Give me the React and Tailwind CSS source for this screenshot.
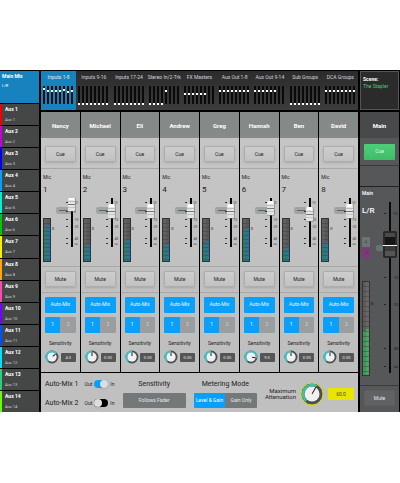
import { useState } from "react";

const auxes = [
  { color: "bg-[#f00000]" },
  { color: "bg-[#c800d8]" },
  { color: "bg-[#0000f0]" },
  { color: "bg-[#00a0ff]" },
  { color: "bg-[#00f0d0]" },
  { color: "bg-[#00c800]" },
  { color: "bg-[#f8f000]" },
  { color: "bg-[#ffa800]" },
  { color: "bg-[#ff48b0]" },
  { color: "bg-[#7000ff]" },
  { color: "bg-[#0050ff]" },
  { color: "bg-[#00e0ff]" },
  { color: "bg-[#28d078]" },
  { color: "bg-[#66ff00]" },
];

// dot heights inside each bank preview, null = no dot
const banks = [
  { name: "Inputs 1-8", dots: [3, 5, 5, 5, 5, 4, 6, 5] },
  { name: "Inputs 9-16", dots: [18, 18, 18, 18, 18, 18, 18, 18] },
  { name: "Inputs 17-24", dots: [18, 18, 18, 18, 18, 18, 18, 18] },
  { name: "Stereo In/2-Trk", dots: [18, 18, 18, 18, 5, null, null, null] },
  { name: "FX Masters", dots: [8, 8, 8, 8, 8, 8, null, null] },
  { name: "Aux Out 1-8", dots: [5, 5, 5, 5, 5, 5, 5, 5] },
  { name: "Aux Out 9-14", dots: [5, 5, 5, 5, 5, 5, null, null] },
  { name: "Sub Groups", dots: [18, 18, 18, 18, 18, 18, 18, 18] },
  { name: "DCA Groups", dots: [5, 5, 5, 5, 5, 5, 5, 5] },
];

const channels = [
  { name: "Nancy", level: 87, meter: 36, sens: "4.0", angle: 50 },
  { name: "Michael", level: 73, meter: 16, sens: "0.00", angle: 0 },
  { name: "Eli", level: 73, meter: 22, sens: "0.00", angle: 0 },
  { name: "Andrew", level: 73, meter: 17, sens: "0.00", angle: 0 },
  { name: "Greg", level: 73, meter: 20, sens: "0.00", angle: 0 },
  { name: "Hannah", level: 80, meter: 33, sens: "9.0", angle: 100 },
  { name: "Ben", level: 67, meter: 14, sens: "0.00", angle: 0 },
  { name: "David", level: 74, meter: 19, sens: "0.00", angle: 0 },
];

const arc = (cx, cy, r, angle) => {
  const point = (deg) => {
    const rad = ((deg - 90) * Math.PI) / 180;
    return `${cx + r * Math.cos(rad)} ${cy + r * Math.sin(rad)}`;
  };
  const large = angle + 140 > 180 ? 1 : 0;
  return `M${point(-140)} A${r} ${r} 0 ${large} 1 ${point(angle)}`;
};

const Sidebar = () => (
  <nav className="w-[39px] shrink-0 flex flex-col gap-px">
    <button className="h-8 px-0.5 pt-0.5 bg-[#1683be] text-left text-white flex flex-col gap-[3px]">
      <span className="text-[5px] leading-[7px] font-bold">Main Mix</span>
      <span className="text-[4px] leading-[6px]">L/R</span>
    </button>
    {auxes.map((aux, i) => (
      <button key={i} className="flex-1 flex bg-[#454746] text-left text-white">
        <span className={`w-0.5 self-stretch ${aux.color}`} />
        <span className="flex flex-col gap-1 pl-[3px] pt-0.5">
          <span className="text-[5px] leading-[7px] font-bold">Aux {i + 1}</span>
          <span className="text-[4px] leading-[5px] text-gray-300">Aux {i + 1}</span>
        </span>
      </button>
    ))}
  </nav>
);

const BankTab = ({ bank, active, onClick }) => (
  <button
    onClick={onClick}
    className={`flex-1 min-w-0 h-[39px] pt-0.5 flex flex-col items-center gap-[5px] whitespace-nowrap ${
      active ? "bg-[#1683be] text-gray-200" : "bg-linear-to-b from-[#2c2c2c] to-[#3c3c3c] text-gray-300"
    }`}
  >
    <span className="text-[5px] leading-[8px]">{bank.name}</span>
    <svg width="31" height="20" viewBox="0 0 31 20">
      {bank.dots.map((y, i) => (
        <g key={i}>
          <rect x={i * 4} y="0" width="2" height="18" fill="#0a0a0a" />
          {y !== null && <rect x={i * 4} y={y - 1} width="2" height="2" fill="#fff" />}
        </g>
      ))}
    </svg>
  </button>
);

const Meter = ({ level }) => (
  <svg width="8" height="44" viewBox="0 0 8 44">
    <rect width="8" height="44" fill="#333" />
    <rect x="1" y="1" width="3" height="42" fill="#606060" />
    <rect x="4" y="1" width="3" height="42" fill="#585858" />
    <rect x="1" y={46 - level} width="3" height={level - 3} fill="#347865" />
    <rect x="4" y={43 - level} width="3" height={level} fill="#2674a0" />
    {[5, 9, 13, 17, 21, 25, 29, 33, 37, 41].map((y) => (
      <rect key={y} x="1" y={y} width="6" height="1" fill="#333" opacity="0.35" />
    ))}
  </svg>
);

const marks = [
  [4, "10"],
  [13, "0"],
  [21, "-10"],
  [28, "-20"],
  [40, "-40"],
  [45, "-∞"],
];

const Fader = ({ name, initial }) => {
  const [level, setLevel] = useState(initial);
  const y = Math.round(49 - (level * 49) / 100);
  return (
    <div className="relative">
      <svg width="24" height="52" viewBox="0 0 24 52">
        <rect x="0" y="9" width="16" height="7" rx="2" fill="#a0a4a5" />
        <rect x="3" y="12" width="8" height="1" fill="#606466" />
        {marks.map(([my, label]) => (
          <g key={label}>
            <rect x="10" y={my} width="2" height="1" fill="#333" />
            <text x="18" y={my + 2} fontSize="3" fill="#333">{label}</text>
          </g>
        ))}
        <rect x="15" y="0" width="2" height="49" fill="#050505" />
        <rect x="12" y={y - 7} width="8" height="15" rx="1" fill="#777" opacity="0.5" />
        <rect x="12" y={y - 7} width="7" height="14" rx="1" fill="#e4e4e4" />
        <rect x="13" y={y - 7} width="5" height="3" fill="#fff" />
        <rect x="12" y={y - 3} width="7" height="1" fill="#bdbdbd" />
        <rect x="12" y={y} width="7" height="1" fill="#777" />
        <rect x="12" y={y + 3} width="7" height="1" fill="#c4c4c4" />
      </svg>
      <input
        type="range"
        aria-label={`${name} level`}
        value={level}
        onChange={(e) => setLevel(Number(e.target.value))}
        className="absolute inset-0 w-full h-full opacity-0 cursor-pointer [writing-mode:vertical-lr] [direction:rtl]"
      />
    </div>
  );
};

const Knob = ({ name, initial }) => {
  const [angle, setAngle] = useState(initial);
  return (
    <div className="relative shrink-0">
      <svg width="14" height="14" viewBox="0 0 14 14">
        <circle cx="7" cy="7" r="5.5" fill="none" stroke="#4c5052" strokeWidth="2" />
        <path d={arc(7, 7, 5.5, angle)} fill="none" stroke="#3cc4cc" strokeWidth="2" />
        <circle cx="7" cy="7" r="4.5" fill="#f0f0f0" />
        <line x1="7" y1="6" x2="7" y2="2.5" stroke="#222" strokeWidth="1" transform={`rotate(${angle} 7 7)`} />
      </svg>
      <input
        type="range"
        min="-140"
        max="140"
        aria-label={`${name} sensitivity`}
        value={angle}
        onChange={(e) => setAngle(Number(e.target.value))}
        className="absolute inset-0 w-full h-full opacity-0 cursor-pointer"
      />
    </div>
  );
};

const LightButton = ({ children }) => (
  <button className="block w-full h-4 rounded-[1px] border border-[#adadad] bg-linear-to-b from-[#cdcdcd] to-[#c2c2c2] shadow-sm text-[5px] leading-[12px] text-[#222222]">
    {children}
  </button>
);

const ChannelStrip = ({ channel, number }) => {
  const [autoMix, setAutoMix] = useState(true);
  const [group, setGroup] = useState(1);

  return (
    <section className="flex-1 min-w-0 bg-linear-to-b from-[#c6c6c6] to-[#bebebe] text-[#222222] flex flex-col">
      <h2 className="h-[26px] pt-px bg-[#858a89] text-white text-[6px] font-bold flex items-center justify-center">
        {channel.name}
      </h2>
      <div className="h-[31px] px-1 pt-2 border-b border-[#a8a8a8]">
        <LightButton>Cue</LightButton>
      </div>
      <div className="h-[98px] pl-0.5 pt-1 border-b border-[#a8a8a8]">
        <div className="text-[5px] leading-[9px]">Mic</div>
        <div className="text-[8px] leading-[16px]">{number}</div>
        <div className="flex justify-between">
          <div className="flex pt-5">
            <Meter level={channel.meter} />
            <span className="pt-2 pl-px text-[4px] leading-[6px]">0</span>
          </div>
          <Fader name={channel.name} initial={channel.level} />
        </div>
      </div>
      <div className="h-[26px] px-1 pt-1 border-b border-[#a8a8a8]">
        <LightButton>Mute</LightButton>
      </div>
      <div className="flex-1 px-1 pt-1 flex flex-col">
        <button
          onClick={() => setAutoMix(!autoMix)}
          className={`h-4 rounded-[1px] text-[5px] text-gray-100 ${autoMix ? "bg-[#08a0fa]" : "bg-[#9a9e9e]"}`}
        >
          Auto-Mix
        </button>
        <div className="mt-1 flex h-4 rounded-[1px] overflow-hidden text-[5px]">
          {[1, 2].map((n) => (
            <button
              key={n}
              onClick={() => setGroup(n)}
              className={`flex-1 ${group === n ? "bg-[#08a0fa] text-gray-100" : "bg-[#9a9e9e] text-gray-300"}`}
            >
              {n}
            </button>
          ))}
        </div>
        <div className="mt-1 text-[5px] leading-[13px] text-center">Sensitivity</div>
        <div className="flex items-center justify-between">
          <Knob name={channel.name} initial={channel.angle} />
          <input
            type="text"
            aria-label={`${channel.name} sensitivity value`}
            defaultValue={channel.sens}
            className="w-[15px] h-[9px] rounded-[1px] bg-[#555555] text-gray-200 text-[4px] text-center"
          />
        </div>
      </div>
    </section>
  );
};

const Toggle = ({ label, defaultChecked }) => (
  <label className="flex items-center gap-1.5 cursor-pointer">
    <span className="text-[7px] leading-[10px]">{label}</span>
    <span className="flex items-center gap-0.5 text-[5px] leading-[10px]">
      Out
      <input type="checkbox" defaultChecked={defaultChecked} className="peer sr-only" />
      <span className="flex w-[14px] h-2 rounded-full bg-black peer-checked:bg-[#08a0fa] peer-checked:justify-end">
        <span className="w-2 h-2 rounded-full bg-[#dddddd] shadow" />
      </span>
      In
    </span>
  </label>
);

const AutoMixPanel = () => {
  const [mode, setMode] = useState("Level & Gain");
  const [angle, setAngle] = useState(30);

  return (
    <section className="h-[39px] px-1 pt-0.5 bg-[#c0c0c0] text-[#222222] flex items-center justify-between whitespace-nowrap">
      <div className="flex flex-col gap-[9px]">
        <Toggle label="Auto-Mix 1" defaultChecked />
        <Toggle label="Auto-Mix 2" />
      </div>
      <div className="w-[63px] flex flex-col items-center gap-1">
        <h3 className="text-[7px] leading-[10px]">Sensitivity</h3>
        <button className="w-full h-[15px] rounded-[1px] bg-[#757879] text-gray-200 text-[5px]">
          Follows Fader
        </button>
      </div>
      <div className="w-[63px] flex flex-col items-center gap-1">
        <h3 className="text-[7px] leading-[10px]">Metering Mode</h3>
        <div className="w-full h-[15px] flex rounded-[1px] overflow-hidden text-[5px]">
          {["Level & Gain", "Gain Only"].map((name) => (
            <button
              key={name}
              onClick={() => setMode(name)}
              className={`w-1/2 ${mode === name ? "bg-[#08a0fa] text-white" : "bg-[#757879] text-gray-200"}`}
            >
              {name}
            </button>
          ))}
        </div>
      </div>
      <div className="flex items-center gap-1">
        <label htmlFor="attenuation" className="text-[6px] leading-[6px] text-right">
          Maximum
          <br />
          Attenuation
        </label>
        <div className="relative">
          <svg width="24" height="24" viewBox="0 0 24 24">
            <circle cx="12" cy="12" r="11" fill="#4c5052" stroke="#e2e000" strokeWidth="1" />
            <path d={arc(12, 12, 9, angle)} fill="none" stroke="#3cc4a8" strokeWidth="2.5" />
            <circle cx="12" cy="12" r="7.5" fill="#f0f0f0" />
            <line x1="12" y1="12" x2="12" y2="4" stroke="#222" strokeWidth="1" transform={`rotate(${angle} 12 12)`} />
          </svg>
          <input
            type="range"
            min="-140"
            max="140"
            aria-label="Maximum attenuation"
            value={angle}
            onChange={(e) => setAngle(Number(e.target.value))}
            className="absolute inset-0 w-full h-full opacity-0 cursor-pointer"
          />
        </div>
        <input
          id="attenuation"
          type="text"
          defaultValue="60.0"
          className="w-[26px] h-3 rounded-[1px] bg-[#e8e600] text-[5px] text-center text-[#444444]"
        />
      </div>
    </section>
  );
};

const MainFader = () => {
  const [level, setLevel] = useState(75);
  const y = Math.round(176 - (level * 171) / 100);
  return (
    <div className="relative">
      <svg width="24" height="180" viewBox="0 0 24 180">
        {[
          [16, "10"],
          [48, "0"],
          [80, "-10"],
          [107, "-20"],
          [151, "-40"],
          [169, "-∞"],
        ].map(([my, label]) => (
          <g key={label}>
            <rect x="9" y={my} width="2" height="1" fill="#222" />
            <text x="18" y={my + 2} fontSize="4" fill="#1c1c1c">{label}</text>
          </g>
        ))}
        <rect x="1" y={y} width="8" height="6" rx="2" fill="#687474" />
        <rect x="14" y="5" width="2" height="171" fill="#0a0a0a" />
        <rect x="8" y={y - 14} width="14" height="27" rx="2" fill="#2a2a2a" />
        <rect x="10" y={y - 12} width="10" height="4" fill="#4a4a4a" />
        <rect x="10" y={y - 8} width="10" height="8" fill="#161616" />
        <rect x="10" y={y + 1} width="10" height="6" fill="#3a3a3a" />
        <rect x="10" y={y + 6} width="10" height="5" fill="#555" />
        <rect x="8" y={y} width="14" height="1" fill="#f4f4f4" />
      </svg>
      <input
        type="range"
        aria-label="Main L/R level"
        value={level}
        onChange={(e) => setLevel(Number(e.target.value))}
        className="absolute inset-0 w-full h-full opacity-0 cursor-pointer [writing-mode:vertical-lr] [direction:rtl]"
      />
    </div>
  );
};

const MainStrip = () => (
  <aside className="w-[39px] shrink-0 flex flex-col gap-0.5 text-white">
    <div className="h-[39px] px-0.5 pt-1 border border-[#555555] bg-[#2b2b2b] text-[5px] leading-[7px]">
      <div className="font-bold">Scene:</div>
      <div className="text-[#4cc878] whitespace-nowrap">The Stapler</div>
    </div>
    <section className="flex-1 bg-[#555759] flex flex-col">
      <h2 className="h-[26px] pt-px bg-[#48494b] text-[6px] font-bold flex items-center justify-center">Main</h2>
      <div className="h-7 px-1 pt-1.5 border-b border-[#3a3b3d]">
        <button className="block w-full h-4 rounded-[1px] bg-linear-to-b from-[#4ccf78] to-[#40bc68] text-[5px] text-green-100">
          Cue
        </button>
      </div>
      <div className="h-[21px] border-b border-[#222222]" />
      <div className="h-[199px] pl-0.5 border-b border-[#3a3b3d]">
        <div className="pt-0.5 text-[5px] leading-[8px] font-medium">Main</div>
        <div className="flex">
          <div className="w-[13px] shrink-0 flex flex-col">
            <span className="pt-2 text-[8px] leading-[12px] font-medium">L/R</span>
            <span className="mt-5 w-2 h-[10px] bg-[#6b7674] text-[4px] leading-[10px] text-center text-[#444444]">A</span>
            <span className="mt-px w-2 h-[10px] bg-[#80387c] text-[4px] leading-[10px] text-center text-[#444444]">M</span>
            <div className="mt-[23px] flex">
              <svg width="8" height="95" viewBox="0 0 8 95" className="shrink-0">
                <rect width="8" height="95" fill="#333" />
                <rect x="1" y="1" width="3" height="93" fill="#5e5c5c" />
                <rect x="4" y="1" width="3" height="93" fill="#6a6666" />
                <rect x="1" y="50" width="3" height="44" fill="#41945c" />
                <rect x="4" y="48" width="3" height="46" fill="#4aa468" />
                {Array.from({ length: 18 }, (_, i) => (
                  <rect key={i} x="1" y={5 + i * 5} width="6" height="1" fill="#333" opacity="0.4" />
                ))}
              </svg>
              <span className="pt-5 pl-px text-[4px] leading-[6px] text-black">0</span>
            </div>
          </div>
          <MainFader />
        </div>
      </div>
      <div className="px-1 pt-1">
        <button className="block w-full h-4 rounded-[1px] border border-[#5c5e60] bg-[#606264] text-[5px] leading-[12px] text-gray-200">
          Mute
        </button>
      </div>
    </section>
  </aside>
);

const App = () => {
  const [bank, setBank] = useState("Inputs 1-8");

  return (
    <div className="min-h-screen bg-white pt-[70px] font-[Roboto,sans-serif]">
      <main className="w-full bg-black pt-px pr-px flex gap-0.5">
        <Sidebar />
        <div className="flex-1 min-w-0 flex flex-col">
          <div className="flex">
            {banks.map((b) => (
              <BankTab key={b.name} bank={b} active={bank === b.name} onClick={() => setBank(b.name)} />
            ))}
          </div>
          <div className="mt-0.5 h-[260px] flex gap-px">
            {channels.map((channel, i) => (
              <ChannelStrip key={channel.name} channel={channel} number={i + 1} />
            ))}
          </div>
          <div className="mt-px">
            <AutoMixPanel />
          </div>
        </div>
        <MainStrip />
      </main>
    </div>
  );
};

export default App;
